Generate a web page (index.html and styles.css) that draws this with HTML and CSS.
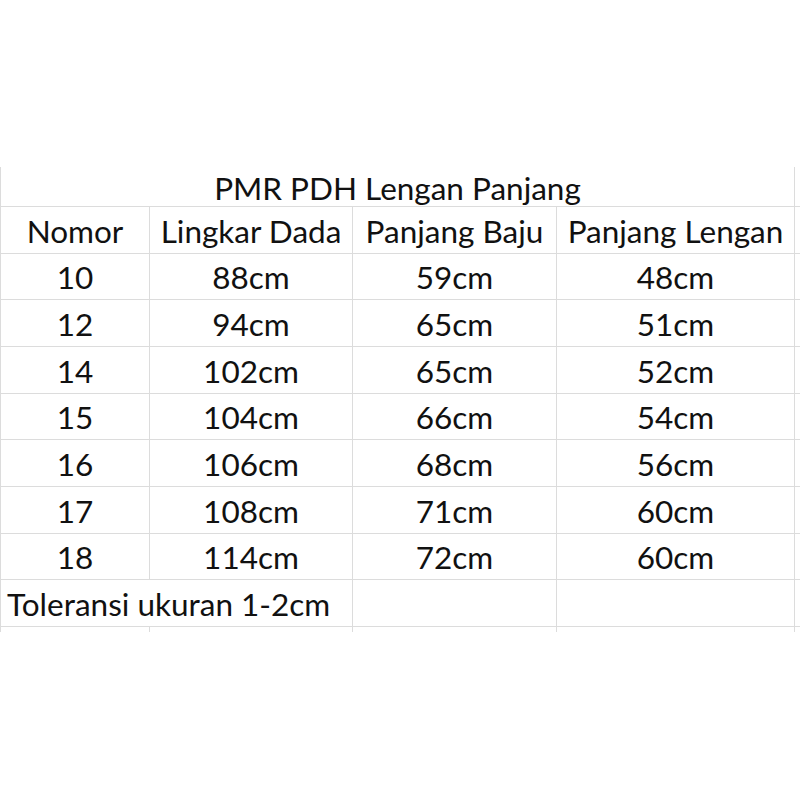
FILE: index.html
```html
<!DOCTYPE html>
<html>
<head>
<meta charset="utf-8">
<link rel="stylesheet" href="styles.css">
</head>
<body>
<div class="page">
  <div class="sheet">
    <div class="cell title">PMR PDH Lengan Panjang</div>
    <div class="cell extra"></div>

    <div class="cell first">Nomor</div>
    <div class="cell">Lingkar Dada</div>
    <div class="cell">Panjang Baju</div>
    <div class="cell">Panjang Lengan</div>
    <div class="cell extra"></div>

    <div class="cell first">10</div><div class="cell">88cm</div><div class="cell">59cm</div><div class="cell">48cm</div><div class="cell extra"></div>
    <div class="cell first">12</div><div class="cell">94cm</div><div class="cell">65cm</div><div class="cell">51cm</div><div class="cell extra"></div>
    <div class="cell first">14</div><div class="cell">102cm</div><div class="cell">65cm</div><div class="cell">52cm</div><div class="cell extra"></div>
    <div class="cell first">15</div><div class="cell">104cm</div><div class="cell">66cm</div><div class="cell">54cm</div><div class="cell extra"></div>
    <div class="cell first">16</div><div class="cell">106cm</div><div class="cell">68cm</div><div class="cell">56cm</div><div class="cell extra"></div>
    <div class="cell first">17</div><div class="cell">108cm</div><div class="cell">71cm</div><div class="cell">60cm</div><div class="cell extra"></div>
    <div class="cell first">18</div><div class="cell">114cm</div><div class="cell">72cm</div><div class="cell">60cm</div><div class="cell extra"></div>

    <div class="cell first note">Toleransi ukuran 1-2cm</div>
    <div class="cell"></div>
    <div class="cell"></div>
    <div class="cell extra"></div>

    <div class="cell first stub"></div><div class="cell stub"></div><div class="cell stub"></div><div class="cell stub"></div><div class="cell stub extra"></div>
  </div>
</div>
</body>
</html>
```

FILE: styles.css
```css
html, body {
  margin: 0;
  padding: 0;
  background: #ffffff;
}

.page {
  width: 800px;
  height: 800px;
  padding-top: 167px;
  box-sizing: border-box;
  overflow: hidden;
}

.sheet {
  display: grid;
  grid-template-columns: 150px 203px 204px 238px 5px;
  grid-template-rows: 40px repeat(9, 46.67px) 5px;
  font-family: Lato, "Open Sans", sans-serif;
  font-size: 31.5px;
  color: #111111;
}

.cell {
  display: flex;
  align-items: center;
  justify-content: center;
  padding-top: 2px;
  border-right: 1px solid #dcdcdc;
  border-bottom: 1px solid #dcdcdc;
  box-sizing: border-box;
  white-space: nowrap;
}

.first {
  border-left: 1px solid #dcdcdc;
}

.title {
  grid-column: 1 / span 4;
  border-left: 1px solid #dcdcdc;
}

.extra {
  border-right: none;
}

.note {
  grid-column: 1 / span 2;
  justify-content: flex-start;
  padding-left: 6px;
}

.stub {
  border-bottom: none;
}
```
